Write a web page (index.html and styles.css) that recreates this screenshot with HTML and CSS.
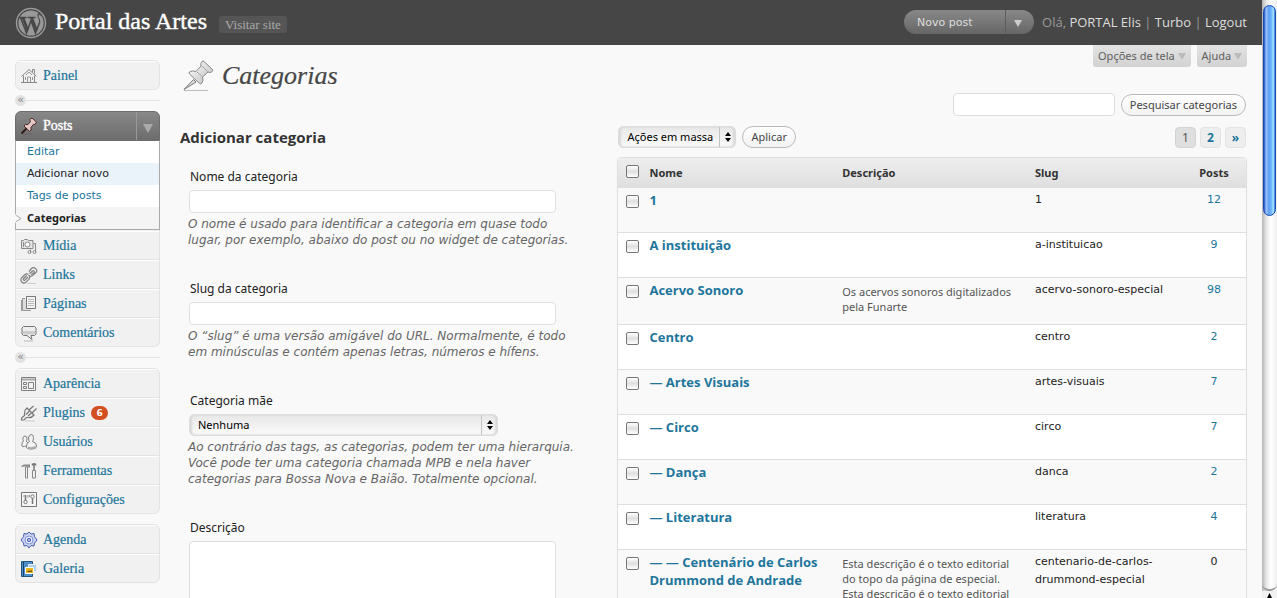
FILE: index.html
```html
<!DOCTYPE html>
<html lang="pt-BR">
<head>
<meta charset="utf-8">
<title>Categorias ‹ Portal das Artes</title>
<link rel="stylesheet" href="styles.css">
</head>
<body>
<div class="window">
<div class="page">
  <header class="topbar">
    <svg class="wp-logo" viewBox="0 0 32 32" aria-hidden="true">
      <circle cx="16" cy="16" r="14.5" fill="#464646" stroke="#999" stroke-width="1.4"/>
      <circle cx="16" cy="16" r="12.6" fill="#999"/>
      <path d="M3.5 10.5h8M12.5 10.5h8" stroke="#464646" stroke-width="1.3"/>
      <path d="M5.5 10.5 L11.5 26 L16 13.5 L20.5 26 L25.5 13 Q26 9 23 7.2" fill="none" stroke="#464646" stroke-width="1.5"/>
      <path d="M8 10.5 L12.6 23 M16.5 10.5 L21.6 23.5" stroke="#464646" stroke-width="2.6"/>
      <path d="M24.2 5.5 Q20.7 8 23.7 12 Q25 14.5 23.4 18 L27 11z" fill="#464646"/>
      <path d="M24.3 7.5 Q22.4 9 24.5 11.5 Q26 14 24.5 17 L27.5 11z" fill="#999"/>
    </svg>
    <h1 class="site-title"><a href="#">Portal das Artes</a></h1>
    <a class="visit" href="#">Visitar site</a>
    <div class="favorite">
      <a class="favorite-main" href="#">Novo post</a>
      <button class="favorite-toggle" type="button" aria-label="Mais ações"><svg viewBox="0 0 10 9"><path d="M1 1h8L5 8z" fill="#ccc"/></svg></button>
    </div>
    <p class="user">Olá, <a href="#">PORTAL Elis</a> | <a href="#">Turbo</a> | <a href="#">Logout</a></p>
  </header>
  <div class="body">
    <nav class="menu" aria-label="Menu principal">
      <ul class="group">
        <li><a class="item" href="#"><svg class="icon" viewBox="0 0 18 18"><g fill="none" stroke="#888"><path d="M1.5 9.5 9 2.5l7.5 7M3.5 8.5v7h11v-7M12.5 5V2.5h2v4M1 15.5h16"/><path d="M7.5 15v-5h3v5M5.5 10v3M12.5 10v3M6 8l3-3 3 3" stroke="#999"/></g></svg>Painel</a></li>
      </ul>
      <div class="sep"><span>«</span></div>
      <div class="open">
        <div class="open-head">
          <a class="open-link" href="#"><svg class="icon" viewBox="0 0 18 18"><path d="M9.5 2.5 12 1l4.500 4-1.500 2.500-1.500-.2-2.500 3v3l-1.500 1L4 9l1.500-1.500h2.500l2.500-3z" fill="#e6c6c3" stroke="#4b2b28"/><path d="M6.500 11.500 1.500 16.500" stroke="#321c1a" stroke-width="2"/><path d="M3 17h9" stroke="#666"/></svg>Posts</a>
          <button class="open-toggle" type="button" aria-label="Recolher"><svg viewBox="0 0 12 10"><path d="M1 1h10L6 10z" fill="#aaa"/></svg></button>
        </div>
        <ul class="sub">
          <li><a href="#">Editar</a></li>
          <li class="hover"><a href="#">Adicionar novo</a></li>
          <li><a href="#">Tags de posts</a></li>
          <li class="current"><a href="#">Categorias</a><svg class="notch" viewBox="0 0 7 9"><path d="M0 0h1l5 4.500-5 4.500H0z" fill="#f9f9f9"/><path d="M.5 1 6 4.500.5 8" fill="none" stroke="#aaa"/></svg></li>
        </ul>
      </div>
      <ul class="group joined">
        <li><a class="item" href="#"><svg class="icon" viewBox="0 0 18 18"><g fill="none" stroke="#888"><path d="M1.500 3.500h2l1-1h3l1 1h4.500v8h-11.500z" fill="#e6e6e6"/><circle cx="7.500" cy="7.500" r="2.500" fill="#fff"/><path d="M3.500 5v5M15.500 15V6.500h-2M10.500 15.500v-3"/><circle cx="9.500" cy="15" r="1.500"/><circle cx="14.500" cy="15" r="1.500"/></g></svg>Mídia</a></li>
        <li><a class="item" href="#"><svg class="icon" viewBox="0 0 18 18"><g fill="none" stroke="#808080" stroke-width="1.200"><path d="M9 5.500 11.500 2.500q2-2 4.200.2t0 4L12.500 9.500q-2 1.500-4 0M9.500 7.500 12.500 5q1-.8 1.500 0t0 1.500l-3 2"/><path d="M8.500 8.500q-2-1.500-4 .5l-3 3q-1.500 2 .3 4t4 .3l3-3q1.500-2 .5-4M8 11l-3 3q-1 .8-1.500 0t.2-1.500l3-3"/></g><path d="M7 17.500h9" stroke="#ccc"/></svg>Links</a></li>
        <li><a class="item" href="#"><svg class="icon" viewBox="0 0 18 18"><path d="M5 3.500H2.500v12h8V15M1.500 5v11" fill="#ddd" stroke="#999"/><path d="M6.500 1.500h9v12h-9z" fill="#f4f4f4" stroke="#777"/><path d="M8 4.500h6M8 6.500h6M8 8.500h6M8 10.500h6" stroke="#bbb"/></svg>Páginas</a></li>
        <li><a class="item" href="#"><svg class="icon" viewBox="0 0 18 18"><path d="M3.500 2.500h11l1.500 1.500v6L14.500 11.500H11l1 4-5-4H3.500L2 10V4z" fill="#eee" stroke="#777"/><path d="M3 7h12v2.500l-1 1H4l-1-1z" fill="#ccc"/><path d="M4 17h9" stroke="#bbb"/></svg>Comentários</a></li>
      </ul>
      <div class="sep"><span>«</span></div>
      <ul class="group">
        <li><a class="item" href="#"><svg class="icon" viewBox="0 0 18 18"><g fill="none" stroke="#808080"><path d="M1.500 2.500h14v13h-14z" fill="#f4f4f4"/><path d="M2 4.500h13" stroke-width="2" stroke="#aaa"/><path d="M8.500 7.500h5v6h-5zM3.500 7.500h3v2h-3zM3.500 11.500h3v2h-3z"/></g></svg>Aparência</a></li>
        <li><a class="item" href="#"><svg class="icon" viewBox="0 0 18 18"><g fill="none" stroke="#777" stroke-width="1.200"><path d="M7 4 14 11q-2.500 3-5.500 2.500H6.500L4 16H1.500v-2L4.500 11.500V9q0-3 2.500-5z" fill="#eee"/><path d="m9 6 4.500-4M12 9l4.500-4.500M6 10.500 9.500 7M8 12l3.500-3"/></g><path d="M5 17h10" stroke="#ccc"/></svg>Plugins <span class="badge">6</span></a></li>
        <li><a class="item" href="#"><svg class="icon" viewBox="0 0 18 18"><g fill="#f2f2f2" stroke="#808080"><path d="M5 3q2 0 2 2.500T6 8q2 1 2 3t-3.500 2.500T2 11q0-2 1.500-3Q2.500 7 3 5t2-2z"/><path d="M11 1.500q2.500 0 2.500 3T12.500 8.500q4 1 4 4.500 0 3-5.500 3t-4.500-3q0-3 3-4.500-1-1-1-3.500T11 1.500z"/></g><path d="M8 14.500q3.500 1.500 7.500-.5" stroke="#aaa" fill="none" stroke-width="2"/></svg>Usuários</a></li>
        <li><a class="item" href="#"><svg class="icon" viewBox="0 0 18 18"><path d="M1 5q1-3 4-2.500h5v3H8v-1H4Q2.500 4.500 1 5z" fill="#888"/><path d="M5.500 5h2v11h-2zM12.500 8.500h3v7.500h-3z" fill="#eee" stroke="#888"/><path d="M14 1v7M12.500 3.500v-2M15.500 3.500v-2" stroke="#777" stroke-width="1.500"/></svg>Ferramentas</a></li>
        <li><a class="item" href="#"><svg class="icon" viewBox="0 0 18 18"><path d="M1.500 1.500h15v14h-15z" fill="#f5f5f5" stroke="#777"/><path d="M5.500 4v6M12.500 7v6" stroke="#777" stroke-width="1.500"/><circle cx="5.500" cy="11" r="1.700" fill="#fff" stroke="#777"/><circle cx="12.500" cy="5.500" r="1.700" fill="#fff" stroke="#777"/><path d="M8 4v3M9.500 4v2M4 4v2" stroke="#999"/></svg>Configurações</a></li>
      </ul>
      <ul class="group last">
        <li><a class="item" href="#"><svg class="icon" viewBox="0 0 18 18"><path d="M9 1l2 2 3-.5.5 3L17 9l-2.500 3-.5 3-3-.5-2 2.500-2-2.500-3 .5-.5-3L1 9l2.500-3.500.5-3L7 3z" fill="#c9d3f0" stroke="#4a5fae"/><circle cx="9" cy="9" r="4" fill="#edf1ff" stroke="#7f90cf"/><circle cx="9" cy="9" r="1.700" fill="#a9b7e4" stroke="#4a5fae"/></svg>Agenda</a></li>
        <li><a class="item" href="#"><svg class="icon" viewBox="0 0 18 18"><path d="M1.500 1.500h11v15h-11z" fill="#4d8fc9" stroke="#23557f"/><path d="M3.500 2v14" stroke="#174267"/><path d="M8.500 4.500h8v7h-8z" fill="#a8d0f5" stroke="#eee"/><path d="M5.500 7.500h8v6h-8z" fill="#e9b51e" stroke="#fff"/><path d="M7 12h5v-2l-2 1-1-1z" fill="#7a5a10"/></svg>Galeria</a></li>
      </ul>
    </nav>
    <main class="content">
      <div class="screen-meta">
        <button type="button">Opções de tela <svg viewBox="0 0 8 7"><path d="M0 0h8L4 7z" fill="#bbb"/></svg></button>
        <button type="button">Ajuda <svg viewBox="0 0 8 7"><path d="M0 0h8L4 7z" fill="#bbb"/></svg></button>
      </div>
      <div class="heading">
        <svg class="pin" viewBox="0 0 32 32"><defs><linearGradient id="g" x1="0" y1="0" x2="1" y2="1"><stop offset="0" stop-color="#fff"/><stop offset="1" stop-color="#bbb"/></linearGradient></defs><path d="M2 30.500h24" stroke="#bbb"/><path d="M11.500 19.500 2 29.500 14 22z" fill="#ddd" stroke="#777"/><path d="M20 1.500q1-1 2 0l8.500 8q1 1.500-1 2.500-1.500 1-3.500 0l-5.500 5q1.500 4-1 6.500-1 1-2 0L7.500 14q-1-1 0-2 2.500-2 6.500-.5l5-5.500q-1-2.500 1-4.500z" fill="url(#g)" stroke="#888"/><path d="m15 12 6 5M20 6l6 6" stroke="#aaa" fill="none"/></svg>
        <h2>Categorias</h2>
      </div>
      <form class="search">
        <input class="field" type="text" aria-label="Pesquisar categorias">
        <button class="pill" type="button">Pesquisar categorias</button>
      </form>
      <div class="columns">
        <form class="add">
          <h3>Adicionar categoria</h3>
          <div class="form-field">
            <label for="name">Nome da categoria</label>
            <input class="field" id="name" type="text">
            <p>O nome é usado para identificar a categoria em quase todo<br>lugar, por exemplo, abaixo do post ou no widget de categorias.</p>
          </div>
          <div class="form-field">
            <label for="slug">Slug da categoria</label>
            <input class="field" id="slug" type="text">
            <p>O “slug” é uma versão amigável do URL. Normalmente, é todo<br>em minúsculas e contém apenas letras, números e hífens.</p>
          </div>
          <div class="form-field">
            <label for="parent">Categoria mãe</label>
            <span class="select wide"><select id="parent"><option>Nenhuma</option></select><svg viewBox="0 0 8 12"><path d="M4 1l3 4H1zM4 11 1 7h6z"/></svg></span>
            <p>Ao contrário das tags, as categorias, podem ter uma hierarquia.<br>Você pode ter uma categoria chamada MPB e nela haver<br>categorias para Bossa Nova e Baião. Totalmente opcional.</p>
          </div>
          <div class="form-field">
            <label for="desc">Descrição</label>
            <textarea class="field" id="desc" rows="5"></textarea>
          </div>
        </form>
        <section class="list">
          <div class="tablenav">
            <span class="select"><select aria-label="Ações em massa"><option>Ações em massa</option></select><svg viewBox="0 0 8 12"><path d="M4 1l3 4H1zM4 11 1 7h6z"/></svg></span>
            <button class="pill" type="button">Aplicar</button>
            <div class="pages"><span class="now">1</span><a href="#">2</a><a href="#">»</a></div>
          </div>
          <table>
            <colgroup><col class="c-check"><col><col><col class="c-slug"><col class="c-posts"></colgroup>
            <thead><tr><th><input type="checkbox" aria-label="Selecionar tudo"></th><th>Nome</th><th>Descrição</th><th>Slug</th><th class="num">Posts</th></tr></thead>
            <tbody>
              <tr><td><input type="checkbox" aria-label="1"></td><td class="name"><a href="#">1</a></td><td class="desc"></td><td>1</td><td class="num"><a href="#">12</a></td></tr>
              <tr><td><input type="checkbox" aria-label="A instituição"></td><td class="name"><a href="#">A instituição</a></td><td class="desc"></td><td>a-instituicao</td><td class="num"><a href="#">9</a></td></tr>
              <tr><td><input type="checkbox" aria-label="Acervo Sonoro"></td><td class="name"><a href="#">Acervo Sonoro</a></td><td class="desc">Os acervos sonoros digitalizados<br>pela Funarte</td><td>acervo-sonoro-especial</td><td class="num"><a href="#">98</a></td></tr>
              <tr><td><input type="checkbox" aria-label="Centro"></td><td class="name"><a href="#">Centro</a></td><td class="desc"></td><td>centro</td><td class="num"><a href="#">2</a></td></tr>
              <tr><td><input type="checkbox" aria-label="Artes Visuais"></td><td class="name"><a href="#">— Artes Visuais</a></td><td class="desc"></td><td>artes-visuais</td><td class="num"><a href="#">7</a></td></tr>
              <tr><td><input type="checkbox" aria-label="Circo"></td><td class="name"><a href="#">— Circo</a></td><td class="desc"></td><td>circo</td><td class="num"><a href="#">7</a></td></tr>
              <tr><td><input type="checkbox" aria-label="Dança"></td><td class="name"><a href="#">— Dança</a></td><td class="desc"></td><td>danca</td><td class="num"><a href="#">2</a></td></tr>
              <tr><td><input type="checkbox" aria-label="Literatura"></td><td class="name"><a href="#">— Literatura</a></td><td class="desc"></td><td>literatura</td><td class="num"><a href="#">4</a></td></tr>
              <tr><td><input type="checkbox" aria-label="Centenário de Carlos Drummond de Andrade"></td><td class="name"><a href="#">— — Centenário de Carlos Drummond de Andrade</a></td><td class="desc">Esta descrição é o texto editorial<br>do topo da página de especial.<br>Esta descrição é o texto editorial</td><td>centenario-de-carlos-drummond-especial</td><td class="num">0</td></tr>
            </tbody>
          </table>
        </section>
      </div>
    </main>
  </div>
</div>
<div class="scrollbar" aria-hidden="true"><div class="thumb"></div><div class="track"></div><svg viewBox="0 0 15 7"><path d="M7.500 2 5 7h5z"/></svg></div>
</div>
</body>
</html>
```
FILE: styles.css
```css
* { box-sizing: border-box; }
body {
  margin: 0;
  background: #f9f9f9;
  color: #222;
  font: 11px/18px "DejaVu Sans", sans-serif;
}
h1, h2, h3, p, ul { margin: 0; padding: 0; }
ul { list-style: none; }
a { color: #21759b; text-decoration: none; }
button { font: inherit; cursor: pointer; }
.window { display: flex; height: 100vh; overflow: hidden; }
.page { flex: 1; min-width: 0; overflow: hidden; }

.topbar {
  display: flex;
  align-items: center;
  height: 45px;
  padding: 0 15px;
  background: #464646;
}
.wp-logo { width: 32px; height: 32px; }
.site-title {
  margin: 0 12px 4px 8px;
  font: 24px/32px "Liberation Serif", serif;
}
.site-title a { color: #fff; -webkit-text-stroke: 0.4px #fff; }
.visit {
  padding: 0 6px;
  margin-top: 4px;
  border-radius: 3px;
  background: #555;
  color: #aaa;
  font: 13px/17px "Liberation Serif", serif;
}
.favorite {
  display: flex;
  height: 24px;
  width: 130px;
  margin: 0 8px 2px auto;
  border-radius: 12px;
  background: linear-gradient(#888, #666);
  overflow: hidden;
}
.favorite-main {
  flex: 1;
  padding-left: 13px;
  border-right: 1px solid #5c5c5c;
  color: #ddd;
  font-size: 11px;
  line-height: 25px;
}
.favorite-toggle { width: 28px; padding: 4px 8px 0 7px; border: 0; background: none; }
.favorite-toggle svg { width: 10px; height: 9px; display: block; }
.user { margin-bottom: 2px; color: #999; font: 13px/18px "Open Sans", sans-serif; }
.user a { color: #ddd; }

.body { display: flex; }
.menu { flex: none; width: 145px; margin: 15px 20px 0 15px; font: 14px/18px "Liberation Serif", serif; }
.group { border: 1px solid #e3e3e3; border-radius: 6px; background: #f1f1f1; overflow: hidden; }
.group li + li { border-top: 1px solid #e3e3e3; }
.group.joined { padding-top: 1px; border-top: 0; border-radius: 0 0 6px 6px; }
.group.last { margin-top: 10px; }
.item {
  display: flex;
  align-items: center;
  height: 28px;
  padding-left: 4px;
  border-top: 1px solid #fff;
  -webkit-text-stroke: 0.2px #21759b;
}
.icon { width: 18px; height: 18px; margin-right: 5px; flex: none; }
.badge {
  margin-left: 6px;
  width: 17px;
  border-radius: 7px;
  background: #d54e21;
  color: #fff;
  font: bold 9px/14px "DejaVu Sans", sans-serif;
  text-align: center;
  -webkit-text-stroke: 0;
}
.sep { display: flex; align-items: center; height: 21px; }
.sep::after { content: ""; flex: 1; height: 1px; background: #e3e3e3; }
.sep span {
  width: 11px;
  height: 11px;
  border-radius: 6px;
  background: #e3e3e3;
  color: #888;
  font: 11px/9px "DejaVu Sans", sans-serif;
  text-align: center;
}
.open-head {
  display: flex;
  height: 30px;
  border: 1px solid #6d6d6d;
  border-radius: 6px 6px 0 0;
  background: linear-gradient(#888, #6d6d6d);
  overflow: hidden;
}
.open-link { display: flex; flex: 1; align-items: center; padding-left: 4px; color: #fff; -webkit-text-stroke: 0.4px #fff; }
.open-toggle { width: 23px; padding: 3px 5px 0; border: 0; border-left: 1px solid #999; background: none; }
.open-toggle svg { width: 12px; height: 10px; display: block; }
.sub { border: 1px solid #aaa; border-top: 0; background: #fff; font: 11px/22px "DejaVu Sans", sans-serif; }
.sub li { position: relative; padding-left: 11px; }
.sub .hover { background: #eaf2fa; }
.sub .hover a { color: #222; }
.sub .current { background: #f4f4f4; font: bold 11px/22px "Noto Sans", sans-serif; }
.sub .current a { color: #222; }
.notch { position: absolute; left: -1px; top: 7px; width: 7px; height: 9px; }

.content { flex: 1; min-width: 0; padding-right: 15px; }
.screen-meta { display: flex; justify-content: flex-end; gap: 6px; height: 22px; }
.screen-meta button {
  padding: 0 5px;
  border: 0;
  border-radius: 0 0 3px 3px;
  background: linear-gradient(#e3e3e3, #d2d2d2);
  color: #606060;
  font: 11px/22px "Noto Sans", sans-serif;
  white-space: nowrap;
}
.screen-meta svg { width: 8px; height: 7px; }
.heading { display: flex; align-items: center; height: 26px; padding-left: 2px; margin-top: -4px; }
.pin { width: 32px; height: 32px; margin-right: 8px; }
h2 { color: #464646; font: italic 26px/36px "Liberation Serif", serif; -webkit-text-stroke: 0.2px #464646; }
.search { display: flex; justify-content: flex-end; align-items: center; gap: 6px; margin-top: 4px; padding-right: 1px; }
.field { display: block; height: 23px; padding: 3px; border: 1px solid #dfdfdf; border-radius: 4px; background: #fff; font: inherit; }
.search .field { width: 162px; }
.pill {
  height: 22px;
  padding: 0 8px;
  border: 1px solid #bbb;
  border-radius: 11px;
  background: linear-gradient(#fff, #f2f2f2);
  color: #464646;
  font: 11px/18px "Noto Sans", sans-serif;
}
.columns { display: grid; grid-template-columns: minmax(0, 41fr) minmax(0, 59fr); margin-top: 10px; }
.add h3 { margin: 1px 0 19px; color: #333; font: bold 15px/20px "Open Sans", sans-serif; }
.form-field { padding: 0 8px; margin-bottom: 30px; white-space: nowrap; }
.form-field label { display: block; margin: 0 2px 2px; font: 12px/22px "Noto Sans", sans-serif; }
.form-field .field { width: 367px; margin-left: 1px; }
.form-field textarea.field { height: 100px; resize: none; }
.form-field p { margin-top: 3px; color: #666; font: italic 12px/16px "DejaVu Sans", sans-serif; }
.select { position: relative; display: inline-flex; height: 22px; }
.select.wide { display: flex; width: 309px; margin-left: 1px; }
.select select {
  appearance: none;
  width: 100%;
  padding: 0 22px 0 8px;
  border: 1px solid #ddd;
  border-radius: 5px;
  background: linear-gradient(#e8e8e8, #fafafa);
  box-shadow: inset 2px 0 2px #d8d8d8, inset -2px 0 2px #d8d8d8;
  color: #000;
  font: 11px/18px "Noto Sans", sans-serif;
}
.select svg { position: absolute; right: 0; top: 1px; width: 17px; height: 20px; padding: 4px 4px; border-left: 1px solid #c4c4c4; pointer-events: none; }
.tablenav { display: flex; gap: 6px; height: 31px; padding: 0 1px; }
.pages { display: flex; gap: 4px; margin-left: auto; padding-top: 1px; }
.pages > * {
  width: 21px;
  height: 21px;
  border: 1px solid #e3e3e3;
  border-radius: 4px;
  background: #eee;
  font: bold 12px/19px "Noto Sans", sans-serif;
  text-align: center;
}
.pages .now { background: #dfdfdf; border-color: #d3d3d3; color: #555; font-weight: normal; }

table { width: 100%; table-layout: fixed; border: 1px solid #dfdfdf; border-radius: 4px 4px 0 0; border-spacing: 0; background: #fff; overflow: hidden; }
.c-check { width: 24px; }
.c-slug { width: 154px; }
.c-posts { width: 64px; }
th { height: 30px; padding: 0 7px; background: linear-gradient(#eee, #dfdfdf); color: #333; font: bold 11px/18px "Noto Sans", sans-serif; text-align: left; }
td { height: 45px; padding: 3px 7px 10px; border-bottom: 1px solid #dfdfdf; vertical-align: top; }
tbody tr:nth-child(odd) { background: #f9f9f9; }
.num { padding-left: 0; padding-right: 0; text-align: center; }
.name { font: bold 13px/18px "Open Sans", sans-serif; }
td.desc { padding-top: 6px; color: #555; font: 11px/15px "Noto Sans", sans-serif; white-space: nowrap; }
table input {
  appearance: none;
  display: block;
  width: 13px;
  height: 13px;
  margin: 0;
  border: 1px solid #777;
  border-radius: 2px;
  background: linear-gradient(#fff, #e0e0e0 50%, #fff);
}
th:first-child { padding: 0 3px 4px 8px; }
td:first-child { padding: 7px 3px 0 8px; }

.scrollbar {
  display: flex;
  flex-direction: column;
  flex: none;
  width: 15px;
  background: linear-gradient(90deg, #b5b5b5, #e8e8e8 30%, #fff 60%, #eee);
}
.thumb {
  height: 211px;
  margin: 5px 1px 0;
  border: 1px solid #1a49b4;
  border-radius: 7px;
  background: linear-gradient(90deg, #1950c8, #9cc4fa 20%, #5b9df2 45%, #75bcff 70%, #a8ebff 85%, #2d6bd0);
}
.track { flex: 1; border-bottom: 2px solid #999; border-radius: 0 0 7px 7px; }
.scrollbar svg { height: 7px; background: #f2f2f2; }
```
